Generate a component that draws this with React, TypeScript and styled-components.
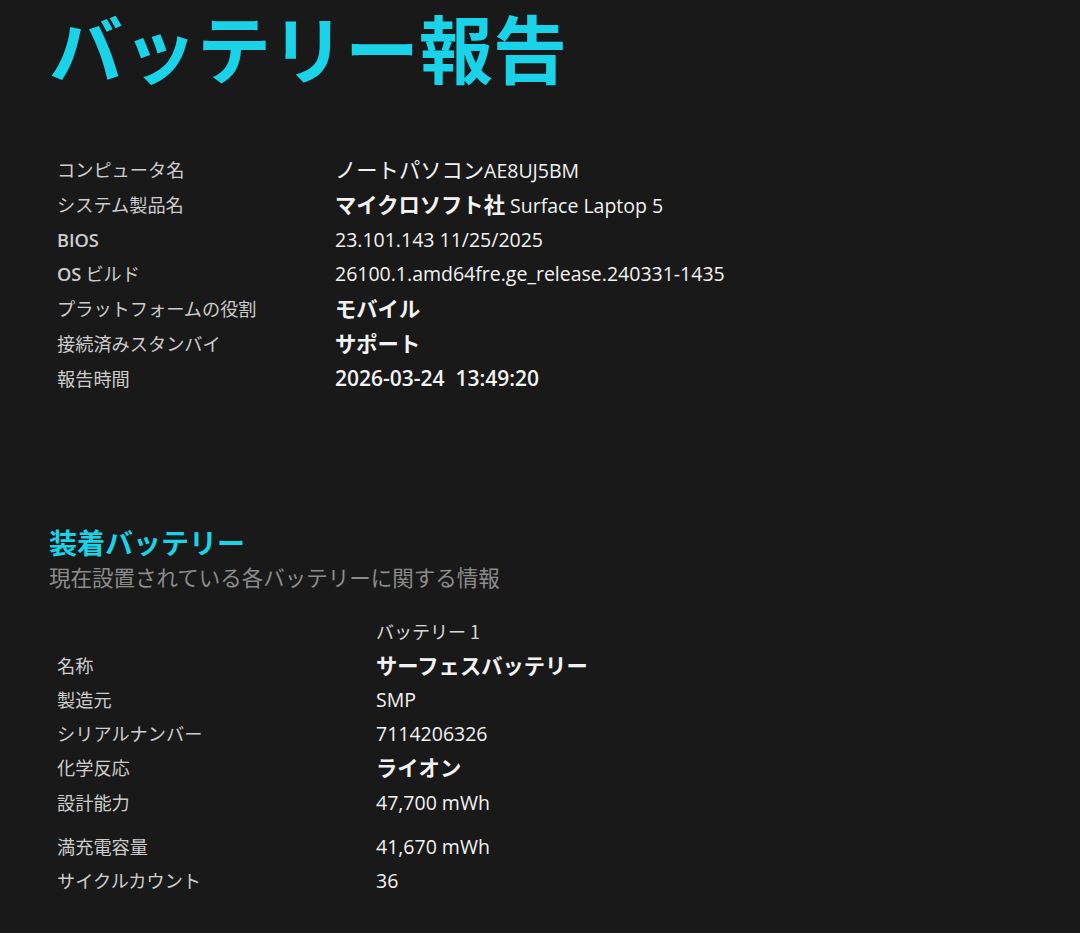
import React from "react";
import styled, { createGlobalStyle } from "styled-components";

const Global = createGlobalStyle`
  html, body { margin: 0; padding: 0; background: #191919; }
  body { font-family: "Noto Sans CJK JP", "Noto Sans", sans-serif; color: #d0d0d0; }
`;

const Page = styled.div`
  width: 1080px;
  min-height: 933px;
  background: #191919;
  box-sizing: border-box;
  padding: 0 0 0 49px;
  overflow: hidden;
`;

const Title = styled.h1`
  margin: 0;
  padding-top: 11px;
  font-family: "Liberation Sans", "Noto Sans CJK JP", sans-serif;
  font-size: 74px;
  line-height: 84px;
  font-weight: 700;
  color: #1ad3e8;
`;

const InfoTable = styled.div<{ $valueX: number; $top: number }>`
  display: grid;
  grid-template-columns: ${(p) => p.$valueX}px 1fr;
  margin-top: ${(p) => p.$top}px;
  padding-left: 8px;
`;

const Label = styled.div<{ $h: number }>`
  height: ${(p) => p.$h}px;
  line-height: ${(p) => p.$h}px;
  font-size: 18.2px;
  color: #cdcdcd;
  font-weight: 400;
  white-space: pre;
`;

const Value = styled.div<{ $h: number }>`
  height: ${(p) => p.$h}px;
  line-height: ${(p) => p.$h}px;
  font-size: 19.5px;
  color: #f2f2f2;
  white-space: pre;
`;

const Latin = styled.span<{ $bold?: boolean; $size?: number }>`
  font-family: "Open Sans", "Noto Sans", sans-serif;
  font-weight: ${(p) => (p.$bold ? 600 : 400)};
  ${(p) => (p.$size ? `font-size: ${p.$size}px;` : "")}
`;

const Jp = styled.span<{ $value?: boolean; $weight?: number }>`
  font-weight: ${(p) => p.$weight ?? (p.$value ? 700 : 400)};
  ${(p) => (p.$value ? "font-size: 21.3px;" : "")}
`;

const SectionTitle = styled.h2`
  margin: 0;
  font-size: 28px;
  line-height: 36px;
  font-weight: 700;
  color: #1ad3e8;
`;

const SectionSub = styled.div`
  font-size: 21.5px;
  line-height: 34px;
  color: #8c8c8c;
`;

const Section = styled.section`
  margin-top: 128px;
`;

const ColHead = styled.div`
  font-size: 18px;
  color: #d8d8d8;
  height: 34px;
  line-height: 34px;
`;

const Spacer = styled.div`
  height: 10px;
`;

type Row = { label: React.ReactNode; value: React.ReactNode };

const sys: Row[] = [
  { label: <Jp>コンピュータ名</Jp>, value: <><Jp $value $weight={400}>ノートパソコン</Jp><Latin>AE8UJ5BM</Latin></> },
  { label: <Jp>システム製品名</Jp>, value: <><Jp $value>マイクロソフト社</Jp><Latin> Surface Laptop 5</Latin></> },
  { label: <Latin $bold>BIOS</Latin>, value: <Latin>23.101.143 11/25/2025</Latin> },
  { label: <><Latin $bold>OS</Latin><Jp> ビルド</Jp></>, value: <Latin>26100.1.amd64fre.ge_release.240331-1435</Latin> },
  { label: <Jp>プラットフォームの役割</Jp>, value: <Jp $value>モバイル</Jp> },
  { label: <Jp>接続済みスタンバイ</Jp>, value: <Jp $value>サポート</Jp> },
  { label: <Jp>報告時間</Jp>, value: <Latin $bold $size={21}>2026-03-24  13:49:20</Latin> },
];

const bat: Row[] = [
  { label: <Jp>名称</Jp>, value: <Jp $value>サーフェスバッテリー</Jp> },
  { label: <Jp>製造元</Jp>, value: <Latin>SMP</Latin> },
  { label: <Jp>シリアルナンバー</Jp>, value: <Latin>7114206326</Latin> },
  { label: <Jp>化学反応</Jp>, value: <Jp $value>ライオン</Jp> },
  { label: <Jp>設計能力</Jp>, value: <Latin>47,700 mWh</Latin> },
];

const bat2: Row[] = [
  { label: <Jp>満充電容量</Jp>, value: <Latin>41,670 mWh</Latin> },
  { label: <Jp>サイクルカウント</Jp>, value: <Latin>36</Latin> },
];

export default function App() {
  return (
    <>
      <Global />
      <Page>
        <Title>バッテリー報告</Title>
        <InfoTable $valueX={278} $top={57}>
          {sys.map((r, i) => (
            <React.Fragment key={i}>
              <Label $h={34.8}>{r.label}</Label>
              <Value $h={34.8}>{r.value}</Value>
            </React.Fragment>
          ))}
        </InfoTable>
        <Section>
          <SectionTitle>装着バッテリー</SectionTitle>
          <SectionSub>現在設置されている各バッテリーに関する情報</SectionSub>
          <InfoTable $valueX={319} $top={20}>
            <div />
            <ColHead>バッテリー 1</ColHead>
            {bat.map((r, i) => (
              <React.Fragment key={i}>
                <Label $h={34.3}>{r.label}</Label>
                <Value $h={34.3}>{r.value}</Value>
              </React.Fragment>
            ))}
            <Spacer />
            <Spacer />
            {bat2.map((r, i) => (
              <React.Fragment key={i}>
                <Label $h={34}>{r.label}</Label>
                <Value $h={34}>{r.value}</Value>
              </React.Fragment>
            ))}
          </InfoTable>
        </Section>
      </Page>
    </>
  );
}
